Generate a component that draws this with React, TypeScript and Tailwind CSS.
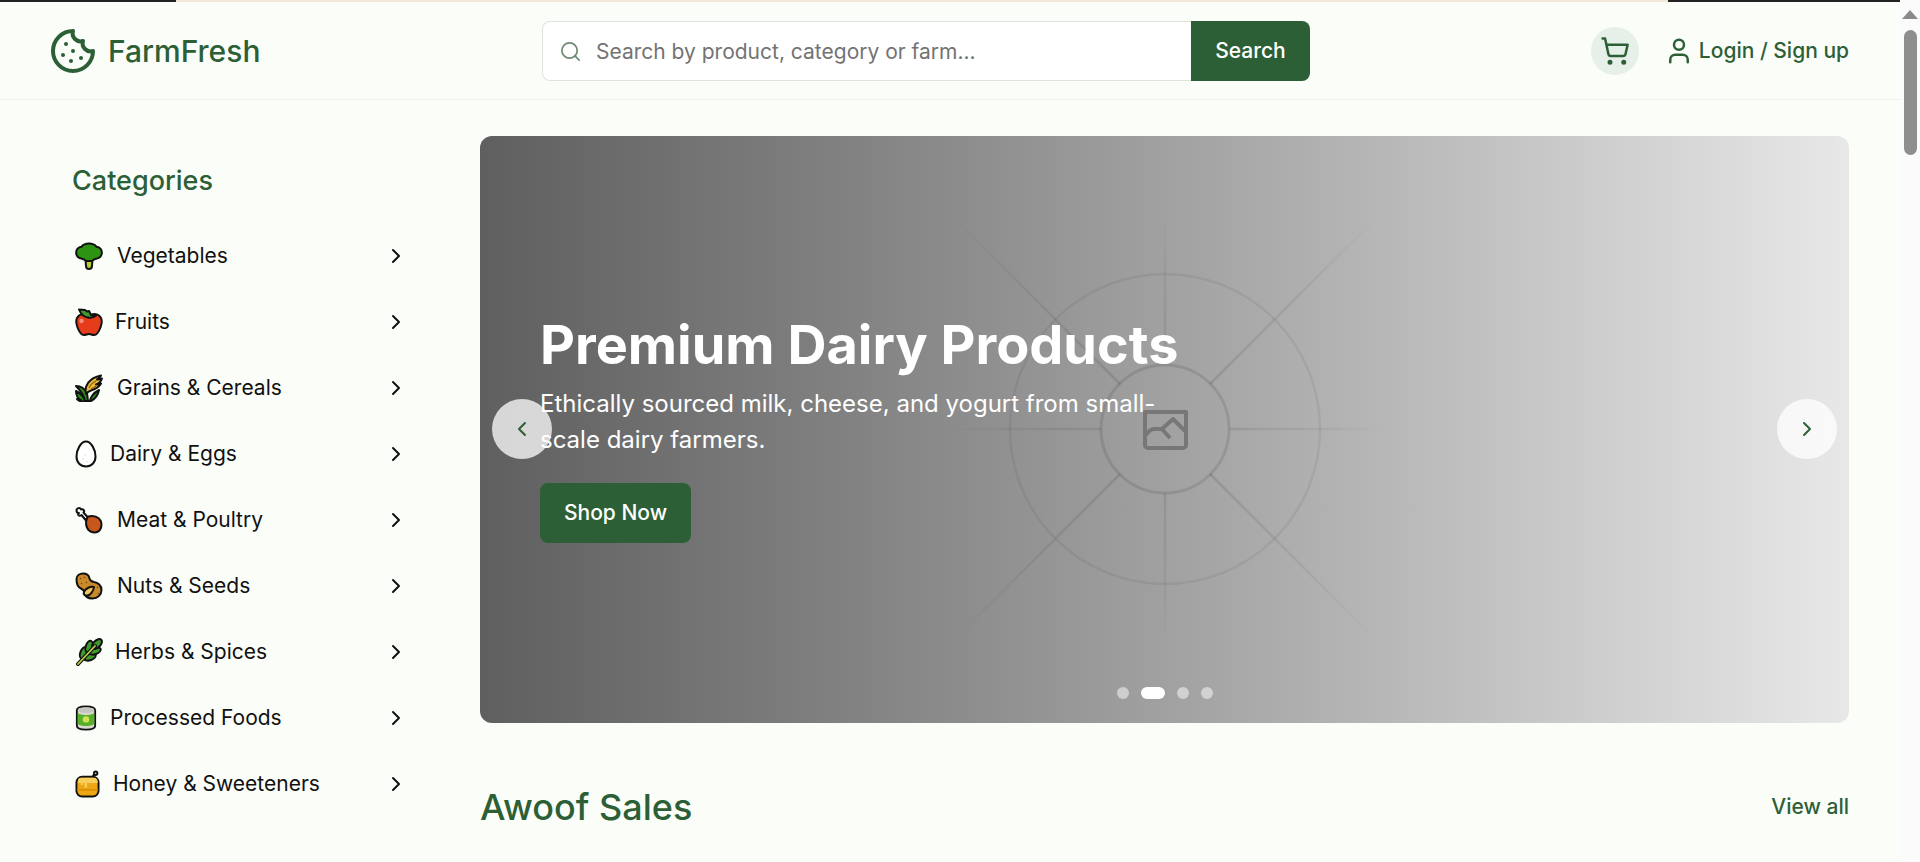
import { ChevronLeft, ChevronRight, Search, ShoppingCart, User, Cookie } from 'lucide-react';
import type { ReactNode } from 'react';

// emoji have no installed colour font, so they are drawn by hand
const outline = { stroke: '#111', strokeWidth: 2, strokeLinejoin: 'round' as const };

const Broccoli = () => (
  <svg viewBox="0 0 28 28" className="w-7 h-7">
    <path d="M10.500 17h7l-.5 7a3 3 0 0 1-6 0z" fill="#b7cc2e" {...outline} />
    <path d="M14 1.500c3.500 0 6 1.200 7.500 3.300 3.500.4 5.700 3.200 5.300 6.500-.4 3-2.800 5-5.800 5.400-1.800.3-3 1-4 2.300h-6c-1-1.300-2.200-2-4-2.300-3-.4-5.400-2.400-5.800-5.400C.8 8 3 5.200 6.500 4.800 8 2.700 10.500 1.500 14 1.500z" fill="#2c9412" {...outline} />
  </svg>
);

const Apple = () => (
  <svg viewBox="0 0 28 28" className="w-7 h-7">
    <path d="M14 8c3-2 7-2.500 10-.5 3 2.500 3.200 7.500 1.500 12-1.500 4-4 7.500-6.500 7.500-2 0-3-1-5-1s-3 1-5 1c-2.500 0-5-3.500-6.500-7.500C.8 15 1 10 4 7.500 7 5.500 11 6 14 8z" fill="#e63c1c" {...outline} />
    <path d="M4 1.500l6 .5 2 1.500 2-.5 2 4 5 .5c-2 2-5 2.500-8 2-4-.5-7-3-9-8z" fill="#3f9c2c" {...outline} />
    <circle cx="6.500" cy="13" r="2.200" fill="#f58f7c" />
  </svg>
);

const Grain = () => (
  <svg viewBox="0 0 28 28" className="w-7 h-7">
    <path d="M10 27c-1-4-3-7-9-10 0 4 2 8 5 9-2 0-3 0-4-1 2 2 5 3 8 2z" fill="#2f8a20" {...outline} />
    <path d="M1 12c5 0 9 3 11 7l1 8h2c0-3 3-8 9-11-1 5-4 9-8 11h-6c-1-5-4-10-9-15z" fill="#2f8a20" {...outline} />
    <path d="M11 20c-2-8 3-16 15-18.500-1 2-2 3-4 4 2 0 3 0 5-1-1 3-3 5-6 6 2 0 3 0 5-1-2 4-7 6-10 7-2 .5-4 2-5 3.500z" fill="#edb93c" {...outline} />
    <path d="M14 14c1-3 3-5 7-7M16 15c2-1 4-2 6-4" fill="none" stroke="#8a6410" strokeWidth="1.200" />
  </svg>
);

const Egg = () => (
  <svg viewBox="0 0 22 28" className="w-[22px] h-7">
    <path d="M11 1.500c5 0 9.500 8 9.500 15 0 6-4 10-9.500 10S1.500 22.500 1.500 16.500c0-7 4.500-15 9.500-15z" fill="#fff" {...outline} />
    <circle cx="8" cy="19" r=".8" fill="#ddd" />
    <circle cx="12" cy="22" r=".8" fill="#ddd" />
    <circle cx="10" cy="15" r=".8" fill="#ddd" />
  </svg>
);

const Drumstick = () => (
  <svg viewBox="0 0 28 28" className="w-7 h-7">
    <path d="M12 11c4-1.500 9-1 12 1.500 3 3 3.500 8.500.5 12-3 3-8 2.500-11-.5-2.500-3-3-8-1.500-13z" fill="#c8571b" {...outline} />
    <path d="M1.500 4.500c0-2.500 3.500-3.500 4.500-1 2.500-1 4 1.500 2.500 3l4 4.500-1.500 3.500-4.500-5.500C4 11 2 8.500 4 7 2.500 7 1.500 6 1.500 4.500z" fill="#fff" {...outline} />
  </svg>
);

const Peanut = () => (
  <svg viewBox="0 0 28 28" className="w-7 h-7">
    <path d="M1.500 7c0-3.500 3-5.500 6.500-5.500 4 0 6 2 6.500 5 .5 2 2 3 4.500 3.500 4 .5 7.500 3.500 7.500 8 0 5-4 8.500-9 8.500-5 0-7.500-2.500-8-6-.3-2-1.500-3-3.500-4C3.500 15.500 1.500 12 1.500 7z" fill="#c98a2b" {...outline} />
    <path d="M9 20c1-3 6-6 10-5-.5 4-3.500 8-6.500 8.500-2.500.5-4.500-1.500-3.500-3.500z" fill="#f2c45f" {...outline} />
    <path d="M5 6l1 1M9 5l1 1M6 11l1 1M11 10l1 1M23 21l1 1M22 15l1 1" stroke="#7a4e10" strokeWidth="1.400" />
  </svg>
);

const Herb = () => (
  <svg viewBox="0 0 28 28" className="w-7 h-7">
    <g fill="#3d9a2c" {...outline}>
      <ellipse cx="8.500" cy="15" rx="3.200" ry="6" transform="rotate(20 8.500 15)" />
      <ellipse cx="15" cy="19" rx="3.200" ry="6" transform="rotate(70 15 19)" />
      <ellipse cx="14" cy="8.500" rx="3.200" ry="6" transform="rotate(20 14 8.500)" />
      <ellipse cx="20" cy="13" rx="3.200" ry="6" transform="rotate(70 20 13)" />
      <ellipse cx="22" cy="6" rx="3.500" ry="6" transform="rotate(45 22 6)" />
    </g>
    <path d="M3 26L20 8" stroke="#111" strokeWidth="4" strokeLinecap="round" fill="none" />
    <path d="M3 26L20 8" stroke="#b9d24a" strokeWidth="1.800" strokeLinecap="round" fill="none" />
  </svg>
);

const Can = () => (
  <svg viewBox="0 0 24 28" className="w-[22px] h-7">
    <path d="M2 5.500c0-5.500 20-5.500 20 0v17c0 5.500-20 5.500-20 0z" fill="#d8d8d0" {...outline} />
    <path d="M3 8.500c4 3 14 3 18 0v12c-4 3-14 3-18 0z" fill="#57b128" />
    <circle cx="12" cy="15.500" r="3.500" fill="#cfe25a" />
    <ellipse cx="12" cy="5.500" rx="9" ry="3" fill="#c6c6c0" />
  </svg>
);

const HoneyPot = () => (
  <svg viewBox="0 0 26 28" className="w-[25px] h-7">
    <path d="M18 7l3-4" stroke="#111" strokeWidth="2.500" />
    <circle cx="21.500" cy="2.800" r="1.800" fill="#ddd" {...outline} />
    <rect x="1.500" y="6.500" width="23" height="20.500" rx="6" fill="#eea614" {...outline} />
    <path d="M3 11c0-2 1-3.500 3-3.500h14c2 0 3.500 1.500 3.500 3.500v2H12.500v4c0 1-2.500 1-2.500 0v-4H8v1.500c0 1-2 1-2 0V13H3z" fill="#f8cf5a" />
    <path d="M2 20h22" stroke="#d98a08" strokeWidth="1.500" />
  </svg>
);

const categories: { name: string; icon: ReactNode; gap: string }[] = [
  { name: 'Vegetables', icon: <Broccoli />, gap: 'gap-[14px]' },
  { name: 'Fruits', icon: <Apple />, gap: 'gap-3' },
  { name: 'Grains & Cereals', icon: <Grain />, gap: 'gap-[14px]' },
  { name: 'Dairy & Eggs', icon: <Egg />, gap: 'gap-[13px]' },
  { name: 'Meat & Poultry', icon: <Drumstick />, gap: 'gap-[14px]' },
  { name: 'Nuts & Seeds', icon: <Peanut />, gap: 'gap-[14px]' },
  { name: 'Herbs & Spices', icon: <Herb />, gap: 'gap-3' },
  { name: 'Processed Foods', icon: <Can />, gap: 'gap-[13px]' },
  { name: 'Honey & Sweeteners', icon: <HoneyPot />, gap: 'gap-[13px]' },
];

// placeholder picture behind the slide text
function HeroPlaceholder() {
  return (
    <svg viewBox="0 0 1369 587" className="absolute inset-0 w-full h-full">
      <defs>
        <radialGradient id="fade-straight" gradientUnits="userSpaceOnUse" cx="685" cy="293" r="220">
          <stop offset="0.3" stopColor="#000" stopOpacity="0.09" />
          <stop offset="0.7" stopColor="#000" stopOpacity="0.05" />
          <stop offset="1" stopColor="#000" stopOpacity="0" />
        </radialGradient>
        <radialGradient id="fade-diagonal" gradientUnits="userSpaceOnUse" cx="685" cy="293" r="305">
          <stop offset="0.2" stopColor="#000" stopOpacity="0.11" />
          <stop offset="0.55" stopColor="#000" stopOpacity="0.07" />
          <stop offset="1" stopColor="#000" stopOpacity="0" />
        </radialGradient>
      </defs>
      <g fill="none" strokeWidth="2.500">
        <path stroke="url(#fade-straight)" d="M685 229V73M685 357v156M621 293H465M749 293h156" />
        <path stroke="url(#fade-diagonal)" d="M640 248L470 78M730 248L900 78M640 338L470 508M730 338L900 508" />
      </g>
      <circle cx="685" cy="293" r="64" fill="none" stroke="#000" strokeOpacity="0.1" strokeWidth="3" />
      <circle cx="685" cy="293" r="155" fill="none" stroke="#000" strokeOpacity="0.06" strokeWidth="2.500" />
      <g fill="none" stroke="#777" strokeWidth="4" strokeLinejoin="round">
        <path d="M665 276h41v33a3 3 0 0 1-3 3h-35a3 3 0 0 1-3-3z" />
        <path d="M665 300c2-3 5-7 9-7h8l11-10 12 12M681 292l9 10" />
      </g>
    </svg>
  );
}

export default function App() {
  return (
    <div className="h-[862px] overflow-hidden flex bg-[#fbfdf9] text-[#111] font-['Inter',sans-serif]">
      <div className="flex-1 min-w-0">
        {/* top loading line */}
        <div className="h-0.5 flex">
          <div className="w-[176px] bg-[#222]" />
          <div className="flex-1 bg-[#f3e7d8]" />
          <div className="w-[232px] bg-[#222]" />
        </div>

        {/* navbar */}
        <header className="h-[98px] border-b border-[#eef1ea] pl-[49px] pr-[51px] pt-px flex items-center">
          <div className="flex items-center gap-[11px] w-[493px]">
            <Cookie className="w-12 h-12 text-[#2d5f36]" strokeWidth={2} />
            <span className="text-[30px] font-medium text-[#2d5f36]">FarmFresh</span>
          </div>

          <div className="flex h-[60px] w-[768px]">
            <div className="flex-1 flex items-center bg-white border border-[#dde5db] border-r-0 rounded-l-lg pl-[16px]">
              <Search className="w-[23px] h-[23px] text-[#6f8a75] mr-[14px]" strokeWidth={1.800} />
              <span className="text-[21px] text-[#737373] pt-px">Search by product, category or farm...</span>
            </div>
            <button className="w-[119px] bg-[#2d5f36] text-white text-[21px] font-medium rounded-r-lg">Search</button>
          </div>

          <div className="flex items-center ml-auto">
            <div className="w-12 h-12 rounded-full bg-[#e6f0e8] flex items-center justify-center">
              <ShoppingCart className="w-[30px] h-[30px] text-[#2d5f36]" strokeWidth={2} />
            </div>
            <User className="w-[30px] h-[30px] text-[#2d5f36] ml-[25px] mr-[5px]" strokeWidth={2} />
            <span className="text-[21px] font-medium text-[#2d5f36]">Login / Sign up</span>
          </div>
        </header>

        <div className="flex pl-[72px] pr-[51px] pt-9">
          {/* sidebar */}
          <aside className="w-[336px] mr-[72px] shrink-0">
            <h2 className="text-[27px] font-medium text-[#2d5f36] leading-[30px] mt-[30px] mb-[27px]">Categories</h2>
            <ul className="flex flex-col">
              {categories.map((cat) => (
                <li key={cat.name} className="h-[66px] flex items-center justify-between pl-[3px]">
                  <div className={`flex items-center ${cat.gap}`}>
                    {cat.icon}
                    <span className="text-[21px]">{cat.name}</span>
                  </div>
                  <ChevronRight className="w-6 h-6" strokeWidth={2} />
                </li>
              ))}
            </ul>
          </aside>

          <main className="flex-1 min-w-0">
            {/* slider */}
            <section className="relative h-[587px] rounded-xl overflow-hidden bg-gradient-to-r from-[#5f5f5f] to-[#e8e8e8]">
              <HeroPlaceholder />
              <div className="absolute left-[60px] top-[177px] w-[640px] text-white">
                <h1 className="text-[54px] leading-[64px] font-bold">Premium Dairy Products</h1>
                <p className="text-[24px] leading-9 mt-[9px]">Ethically sourced milk, cheese, and yogurt from small-scale dairy farmers.</p>
                <button className="mt-[25px] w-[151px] h-[60px] rounded-lg bg-[#2d5f36] text-[21px] font-medium">Shop Now</button>
              </div>
              <button className="absolute left-3 top-[263px] w-[60px] h-[60px] rounded-full bg-white/75 flex items-center justify-center text-[#2d5f36]">
                <ChevronLeft className="w-6 h-6" />
              </button>
              <button className="absolute right-3 top-[263px] w-[60px] h-[60px] rounded-full bg-white/75 flex items-center justify-center text-[#2d5f36]">
                <ChevronRight className="w-6 h-6" />
              </button>
              <div className="absolute bottom-[24px] left-0 right-0 flex justify-center items-center gap-3">
                <span className="w-3 h-3 rounded-full bg-white/50" />
                <span className="w-6 h-3 rounded-full bg-white" />
                <span className="w-3 h-3 rounded-full bg-white/50" />
                <span className="w-3 h-3 rounded-full bg-white/50" />
              </div>
            </section>

            <div className="flex items-center justify-between mt-[57px]">
              <h2 className="text-[36px] font-medium text-[#2d5f36]">Awoof Sales</h2>
              <span className="text-[21px] font-medium text-[#2d5f36]">View all</span>
            </div>
          </main>
        </div>
      </div>

      {/* scrollbar */}
      <div className="w-5 shrink-0 bg-[#fbfbfb] flex flex-col items-center pt-[10px]">
        <span className="w-0 h-0 border-x-[8px] border-x-transparent border-b-[9px] border-b-[#8a8a8a]" />
        <span className="w-[13px] h-[125px] mt-[11px] rounded-full bg-[#8e8e8e]" />
      </div>
    </div>
  );
}
